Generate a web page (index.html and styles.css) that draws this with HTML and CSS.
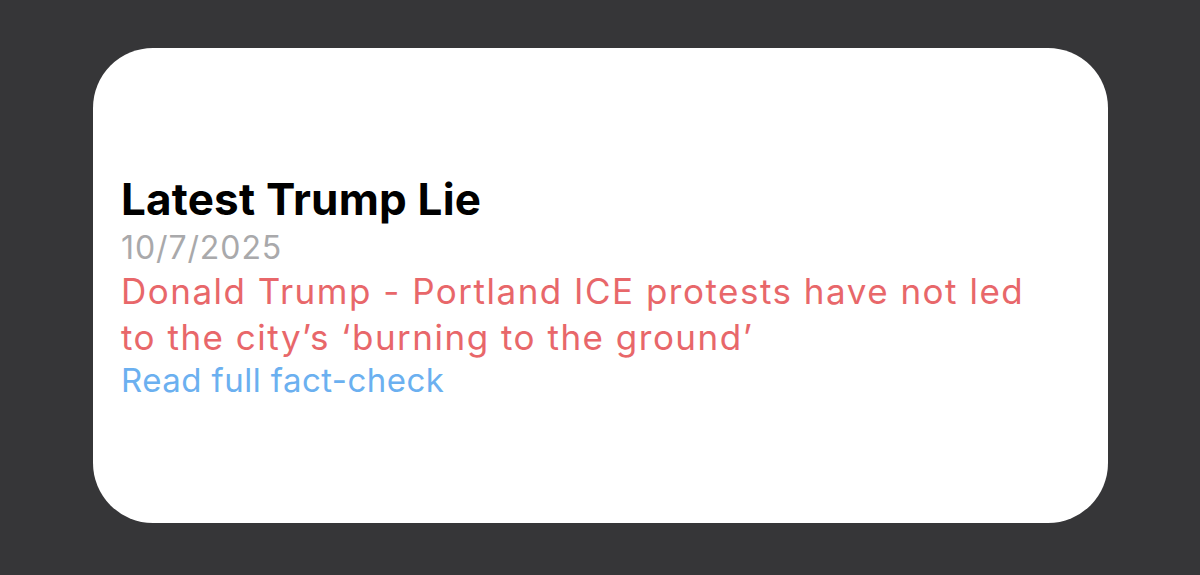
FILE: index.html
```html
<!DOCTYPE html>
<html>
<head>
<meta charset="utf-8">
<link rel="stylesheet" href="styles.css">
</head>
<body>
<div class="page">
  <div class="card">
    <div class="content">
      <div class="title">Latest Trump Lie</div>
      <div class="date">10/7/2025</div>
      <div class="claim">Donald Trump - Portland ICE protests have not led to the city’s ‘burning to the ground’</div>
      <div class="link">Read full fact-check</div>
    </div>
  </div>
</div>
</body>
</html>
```
FILE: styles.css
```css
html, body {
  margin: 0;
  padding: 0;
  background: #363638;
}
.page {
  width: 1200px;
  height: 575px;
  padding: 48px 92px 52px 93px;
  box-sizing: border-box;
}
.card {
  width: 100%;
  height: 100%;
  background: #ffffff;
  border-radius: 60px;
  display: flex;
  align-items: center;
  padding: 0 28px;
  box-sizing: border-box;
  font-family: Inter, "Noto Sans", sans-serif;
}
.content {
  display: flex;
  flex-direction: column;
  margin-top: 3px;
}
.title {
  font-size: 44px;
  font-weight: 700;
  color: #000;
  line-height: 50px;
  letter-spacing: 0.2px;
}
.date {
  margin-top: 3px;
  font-size: 32px;
  color: #a9a9ab;
  line-height: 42px;
  letter-spacing: 0.9px;
}
.claim {
  margin-top: -1px;
  font-size: 35px;
  color: #e8676a;
  line-height: 46px;
  letter-spacing: 1.5px;
  max-width: 920px;
}
.link {
  font-size: 33px;
  color: #6bb0f0;
  line-height: 40px;
  letter-spacing: 0.45px;
}
```
